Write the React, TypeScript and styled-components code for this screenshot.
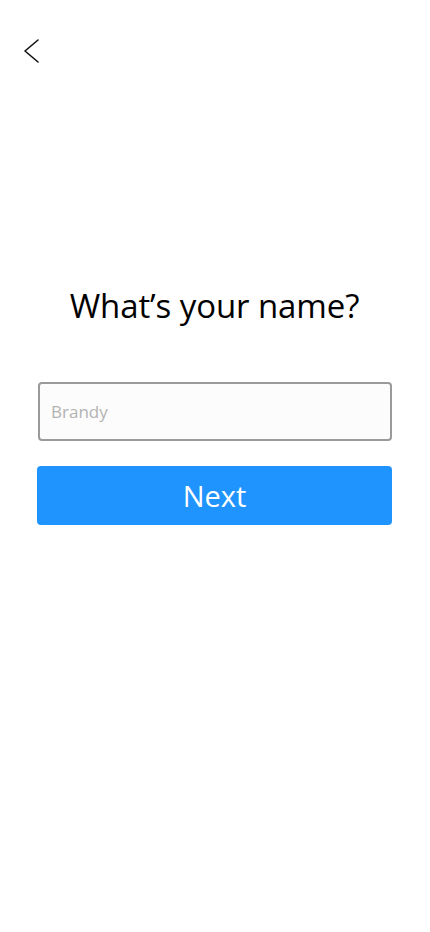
import React from "react";
import styled, { createGlobalStyle } from "styled-components";

const Global = createGlobalStyle`
  html, body { margin: 0; padding: 0; background: #ffffff; }
  body { font-family: "Open Sans", "Noto Sans", sans-serif; }
  * { box-sizing: border-box; }
`;

const Page = styled.div`
  width: 430px;
  height: 932px;
  background: #ffffff;
  display: flex;
  flex-direction: column;
`;

const TopBar = styled.div`
  height: 100px;
  padding: 38px 0 0 19px;
`;

const BackButton = styled.button`
  border: none;
  background: none;
  padding: 0;
  width: 24px;
  height: 26px;
  display: flex;
  align-items: center;
  justify-content: center;
  cursor: pointer;
`;

const Content = styled.div`
  display: flex;
  flex-direction: column;
  align-items: stretch;
  padding: 184px 38px 0 37px;
`;

const Title = styled.h1`
  margin: 0;
  text-align: center;
  font-family: "Open Sans", sans-serif;
  font-weight: 400;
  font-size: 33px;
  line-height: 44px;
  color: #000;
  letter-spacing: -0.1px;
`;

const NameInput = styled.input`
  margin: 54px 0 0 1px;
  height: 59px;
  border: 2px solid #9a9a9a;
  border-radius: 4px;
  background: #fcfcfc;
  padding: 0 11px;
  font-family: "Open Sans", sans-serif;
  font-size: 17px;
  color: #333;
  outline: none;
  &::placeholder { color: #b3b3b3; }
`;

const NextButton = styled.button`
  margin-top: 25px;
  height: 59px;
  border: none;
  border-radius: 4px;
  background: #2094fe;
  color: #fff;
  font-family: "Open Sans", sans-serif;
  font-size: 29px;
  font-weight: 400;
  cursor: pointer;
`;

export default function App() {
  return (
    <>
      <Global />
      <Page>
        <TopBar>
          <BackButton aria-label="Back">
            <svg width="20" height="26" viewBox="0 0 20 26" fill="none">
              <path d="M17 2 L4 13 L17 24" stroke="#111" strokeWidth="1.6" strokeLinecap="round" strokeLinejoin="round" />
            </svg>
          </BackButton>
        </TopBar>
        <Content>
          <Title>What’s your name?</Title>
          <NameInput placeholder="Brandy" />
          <NextButton>Next</NextButton>
        </Content>
      </Page>
    </>
  );
}
